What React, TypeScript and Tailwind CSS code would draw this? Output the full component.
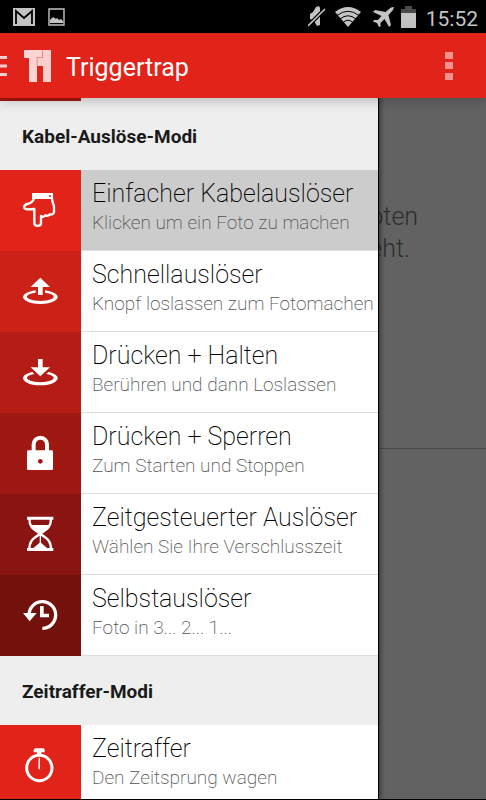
import type { ReactNode } from 'react';

type Mode = {
  title: string;
  hint: string;
  tile: string;
  icon: ReactNode;
  active?: boolean;
};

const cableModes: Mode[] = [
  {
    title: 'Einfacher Kabelauslöser',
    hint: 'Klicken um ein Foto zu machen',
    tile: 'bg-[#e2231a]',
    active: true,
    icon: (
      <>
        <path d="M96 69h63v18H96z" fill="currentColor" />
        <circle cx="150" cy="78" r="3" fill="#e2231a" />
        <path
          d="M102 86C98 97 91 100 82 102C70 105 70 117 80 118L103 117V160C103 170 123 170 123 160V138C129 142 134 140 136 136C142 139 147 137 149 133C156 135 162 131 162 125V111C162 103 157 100 156 86"
          fill="none"
          stroke="currentColor"
          strokeWidth="7"
          strokeLinejoin="round"
        />
      </>
    ),
  },
  {
    title: 'Schnellauslöser',
    hint: 'Knopf loslassen zum Fotomachen',
    tile: 'bg-[#cc2117]',
    icon: (
      <path
        d="M121 80L150 108H128V132H114V108H92ZM107 118A52 21 0 1 0 135 118V125A40 13 0 1 1 107 125Z"
        fill="currentColor"
      />
    ),
  },
  {
    title: 'Drücken + Halten',
    hint: 'Berühren und dann Loslassen',
    tile: 'bg-[#b51c15]',
    icon: (
      <path
        d="M114 81H128V106H150L121 133L92 106H114ZM97 120A52 21 0 1 0 145 120L139 126A40 13 0 1 1 103 126Z"
        fill="currentColor"
      />
    ),
  },
  {
    title: 'Drücken + Sperren',
    hint: 'Zum Starten und Stoppen',
    tile: 'bg-[#9f1812]',
    icon: (
      <>
        <path d="M101 114V94a20 20 0 0 1 40 0V114" fill="none" stroke="currentColor" strokeWidth="12" />
        <rect x="81" y="112" width="78" height="59" rx="4" fill="currentColor" />
        <circle cx="121" cy="145" r="7" fill="#9f1812" />
      </>
    ),
  },
  {
    title: 'Zeitgesteuerter Auslöser',
    hint: 'Wählen Sie Ihre Verschlusszeit',
    tile: 'bg-[#891411]',
    icon: (
      <>
        <path d="M81 68h79v9H81zM81 162h79v9H81z" fill="currentColor" />
        <path
          d="M88 74C88 98 98 104 117 117V122C98 135 88 141 88 166M153 74C153 98 143 104 124 117V122C143 135 153 141 153 166"
          fill="none"
          stroke="currentColor"
          strokeWidth="7"
        />
        <path d="M93 93H148L123 119V146L141 162H100L119 146V119Z" fill="currentColor" />
      </>
    ),
  },
  {
    title: 'Selbstauslöser',
    hint: 'Foto in 3... 2... 1...',
    tile: 'bg-[#73110d]',
    icon: (
      <>
        <path d="M87 119A40 40 0 1 1 127 160" fill="none" stroke="currentColor" strokeWidth="10" />
        <path d="M69 114H110L89 139ZM120 93H131V116H147V127H120Z" fill="currentColor" />
      </>
    ),
  },
];

const lapseModes: Mode[] = [
  {
    title: 'Zeitraffer',
    hint: 'Den Zeitsprung wagen',
    tile: 'bg-[#e2231a]',
    icon: (
      <>
        <circle cx="118" cy="129" r="38" fill="none" stroke="currentColor" strokeWidth="9" />
        <path d="M105 70H131L134 74V82H124V92H111V82H101V74ZM116 98H120V133H115Z" fill="currentColor" />
      </>
    ),
  },
];

function StatusBar() {
  return (
    <div className="flex h-[33px] shrink-0 items-center bg-black pl-[13px] pr-2 text-[#c4c4c4]">
      <svg className="h-[18px] w-[22px]" viewBox="0 0 22 18">
        <path d="M0 0h22v18H0z" fill="currentColor" />
        <path d="M3 16V3L11 10L19 3V16" fill="none" stroke="#000" strokeWidth="1.8" />
      </svg>
      <svg className="ml-[13px] h-[18px] w-[17px]" viewBox="0 0 17 18">
        <path d="M1 1h15v16H1z" fill="none" stroke="currentColor" strokeWidth="1.4" />
        <path d="M2 15V12L5 9L8 11L9 10L11 12L13 11L15 13V15Z" fill="currentColor" />
      </svg>
      <svg className="ml-auto h-[21px] w-[18px]" viewBox="0 0 18 21">
        <path d="M2 8L5 6L8 1L11 0L12 2V19L9 20L6 15L2 13Z" fill="currentColor" />
        <path d="M0 20L17 3" stroke="#000" strokeWidth="4" />
        <path d="M0 20L17 3" stroke="currentColor" strokeWidth="1.6" />
      </svg>
      <svg className="ml-[9px] h-5 w-[26px]" viewBox="0 0 26 20">
        <path d="M0 5Q13-5 26 5L13 20Z" fill="currentColor" />
        <path
          d="M2 8.500Q13 0 24 8.500M5 12Q13 5.500 21 12M8 15.500Q13 11 18 15.500"
          fill="none"
          stroke="#000"
          strokeWidth="1"
        />
      </svg>
      <svg className="ml-3 h-5 w-[21px]" viewBox="0 0 21 20">
        <path
          d="M21 0L18 .5L12.500 5L2 3L0 5L8.500 9L5 13L1 13L0 14.500L4 16L6 20L7.500 19.500V16L11.500 12L16 20L18 18L15.500 8L20 3Z"
          fill="currentColor"
        />
      </svg>
      <svg className="ml-[7px] h-[22px] w-[15px]" viewBox="0 0 15 22">
        <path d="M4 0h7v3h4v4H0V3h4z" fill="#4a4a4a" />
        <path d="M0 7h15v15H0z" fill="currentColor" />
      </svg>
      <span className="ml-[10px] pt-1 text-[21px] leading-7">15:52</span>
    </div>
  );
}

function AppBar() {
  return (
    <header className="z-20 flex h-[65px] shrink-0 items-center bg-[#e2231a] text-white shadow-[0_2px_12px_rgba(0,0,0,0.25)]">
      <button aria-label="Menü" className="flex items-center">
        <svg className="h-5 w-[7px]" viewBox="0 0 7 20">
          <path d="M0 0h7v3H0zM0 8.500h7v3H0zM0 17h7v3H0z" fill="#f9cfcd" />
        </svg>
        <svg className="ml-[17px] h-8 w-[27px]" viewBox="0 0 27 32">
          <path d="M0 0H18V7H13V32H5V8H0Z" fill="#fbd5d3" />
          <path d="M19 0H27V32H19V16H13V8H19Z" fill="#f9cfcd" />
          <path d="M18.500 0V7.500H13V16" fill="none" stroke="#ee8884" />
        </svg>
      </button>
      <h1 className="ml-[15px] pt-1 text-[25px] leading-8">Triggertrap</h1>
      <button aria-label="Weitere Optionen" className="ml-auto mr-[33px]">
        <svg className="h-7 w-[8px]" viewBox="0 0 8 28">
          <path d="M0 0h8v7H0zM0 10h8v7H0zM0 21h8v7H0z" fill="#f3918d" />
        </svg>
      </button>
    </header>
  );
}

function SectionTitle({ children }: { children: ReactNode }) {
  return (
    <h2 className="flex h-[69px] shrink-0 items-center bg-[#eee] px-[22px] pt-[3px] text-[19px] font-bold text-[#1a1a1a]">
      {children}
    </h2>
  );
}

function ModeRow({ mode }: { mode: Mode }) {
  return (
    <a href="#" className="flex h-[81px] shrink-0">
      <span className={`flex w-[81px] shrink-0 items-center justify-center text-white ${mode.tile}`}>
        <svg className="size-[41px]" viewBox="60 60 123 123">
          {mode.icon}
        </svg>
      </span>
      <span
        className={`flex min-w-0 flex-1 flex-col border-b border-[#ddd] pl-[11px] pt-2 font-extralight whitespace-nowrap ${
          mode.active ? 'bg-[#ccc]' : 'bg-white'
        }`}
      >
        <span className="text-[25px] leading-8 text-black">{mode.title}</span>
        <span className="text-[19px] leading-[26px] text-[#555]">{mode.hint}</span>
      </span>
    </a>
  );
}

export default function App() {
  return (
    <div className="flex h-screen flex-col overflow-hidden bg-black pb-px font-[Roboto,sans-serif]">
      <StatusBar />
      <AppBar />
      <div className="grid min-h-0 flex-1 grid-rows-[minmax(0,1fr)]">
        <main className="col-start-1 row-start-1 bg-[#626262]">
          <p className="h-[351px] border-b border-[#484848] pl-[76%] pt-[103px] text-[25px] font-light leading-8 text-[#2e2e2e]">
            oten
            <br />
            eht.
          </p>
        </main>
        <nav className="z-10 col-start-1 row-start-1 flex w-7/9 flex-col overflow-hidden bg-white shadow-[1px_0_0_#000,3px_0_4px_rgba(0,0,0,0.4)]">
          {/* tail of the row scrolled under the app bar */}
          <div className="h-[3px] shrink-0 bg-[#eee]">
            <div className="h-full w-[81px] bg-[#a81710]" />
          </div>
          <SectionTitle>Kabel-Auslöse-Modi</SectionTitle>
          {cableModes.map(mode => (
            <ModeRow key={mode.title} mode={mode} />
          ))}
          <SectionTitle>Zeitraffer-Modi</SectionTitle>
          {lapseModes.map(mode => (
            <ModeRow key={mode.title} mode={mode} />
          ))}
        </nav>
      </div>
    </div>
  );
}
